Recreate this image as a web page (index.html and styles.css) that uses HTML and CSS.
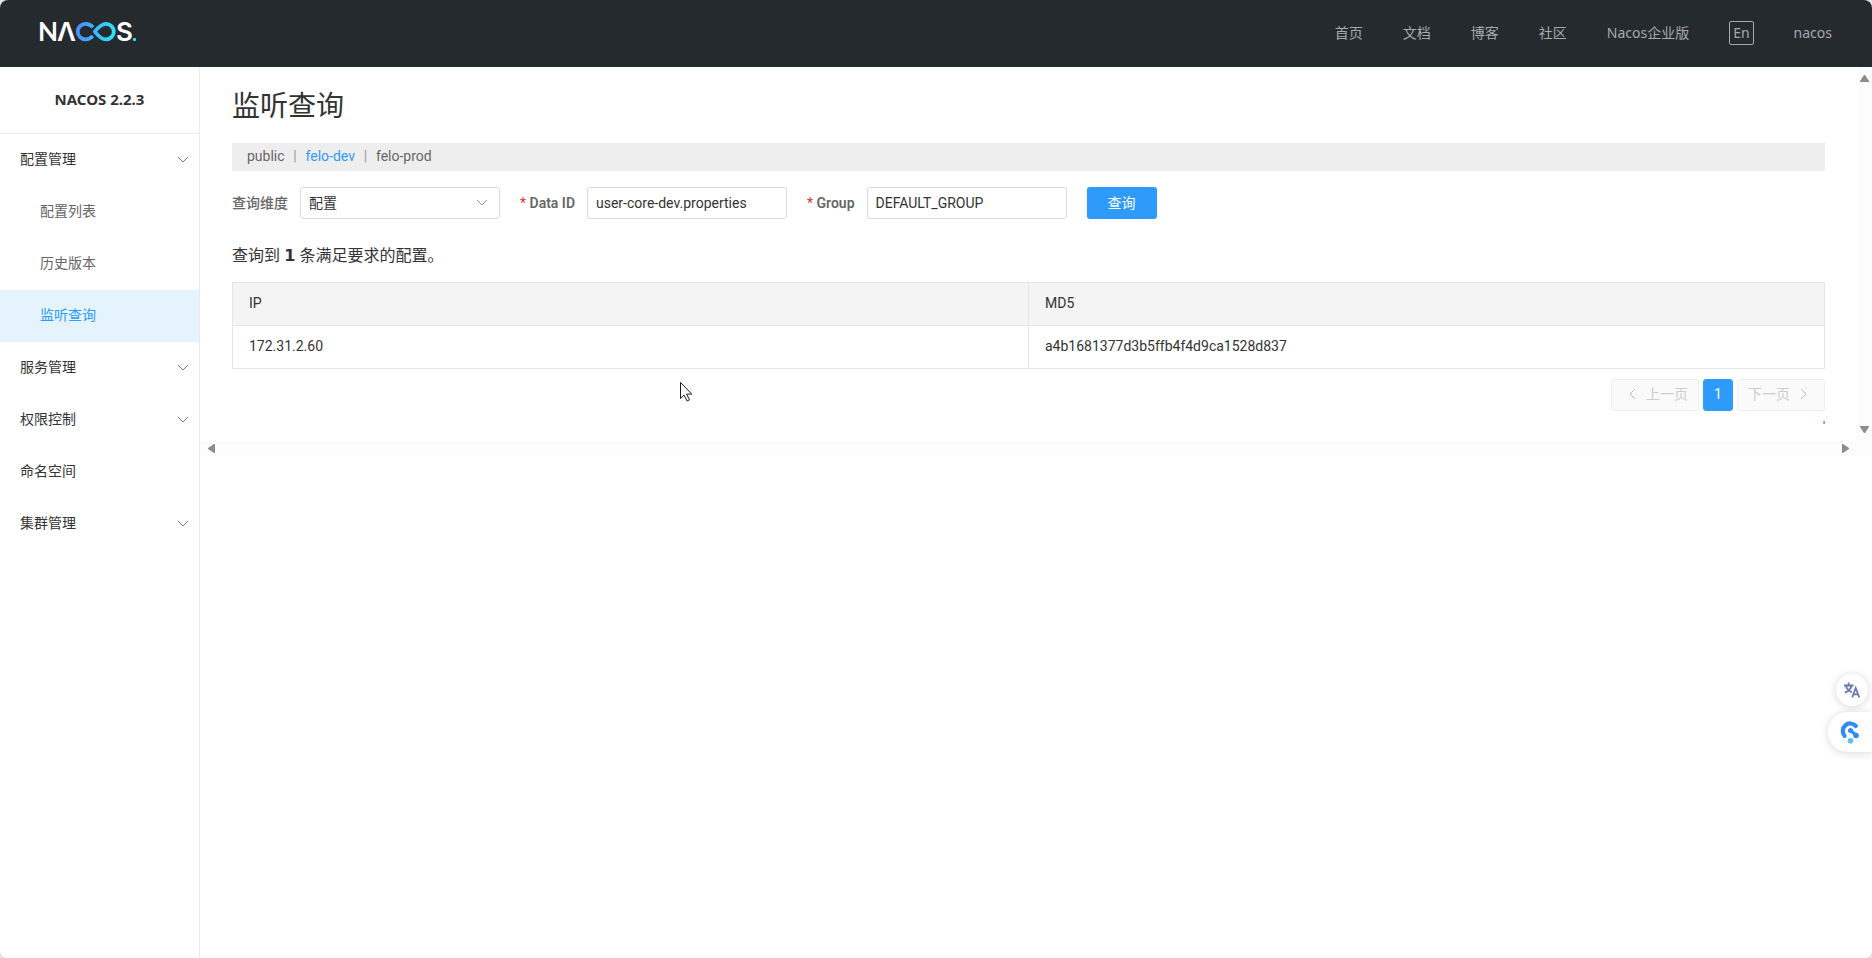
FILE: index.html
```html
<!DOCTYPE html>
<html lang="zh-CN">
<head>
<meta charset="utf-8">
<title>Nacos</title>
<link rel="stylesheet" href="styles.css">
</head>
<body>
<div class="app">
  <header class="header">
    <a class="logo" href="#" aria-label="Nacos">
      <svg width="102" height="36" viewBox="-4 -5 102 36">
        <defs>
          <linearGradient id="loop" gradientUnits="userSpaceOnUse" x1="36" y1="0" x2="76" y2="0">
            <stop offset="0" stop-color="#4a8cff"/>
            <stop offset="1" stop-color="#2ee6f5"/>
          </linearGradient>
        </defs>
        <text class="logo-text" x="-2" y="21">N</text>
        <text class="logo-text wide" x="17" y="21">Λ</text>
        <path d="M53 7.200C51 5 48.500 3.800 45.500 3.800a7.800 7.800 0 0 0 0 15.600c2.800 0 5.200-1.100 7.300-3.400" fill="none" stroke="url(#loop)" stroke-width="3.800"/>
        <path d="M54.800 11.600C58 7.500 61.500 3.800 66 3.800a7.800 7.800 0 0 1 0 15.600C61.500 19.400 58 15.700 54.800 11.600Z" fill="none" stroke="url(#loop)" stroke-width="3.800" stroke-linejoin="round"/>
        <text class="logo-text wide" x="76" y="21">S</text>
        <rect x="93" y="18" width="3" height="3" rx="1" fill="#2ee6f5"/>
      </svg>
    </a>
    <nav class="nav">
      <a href="#">首页</a>
      <a href="#">文档</a>
      <a href="#">博客</a>
      <a href="#">社区</a>
      <a href="#">Nacos企业版</a>
      <button class="lang" type="button">En</button>
      <a href="#">nacos</a>
    </nav>
  </header>

  <div class="body">
    <aside class="sidebar">
      <h2 class="version">NACOS 2.2.3</h2>
      <nav class="menu">
        <a class="item" href="#">配置管理<svg class="chevron" viewBox="0 0 12 8"><path d="M1 1l5 5 5-5"/></svg></a>
        <a class="item sub" href="#">配置列表</a>
        <a class="item sub" href="#">历史版本</a>
        <a class="item sub active" href="#">监听查询</a>
        <a class="item" href="#">服务管理<svg class="chevron" viewBox="0 0 12 8"><path d="M1 1l5 5 5-5"/></svg></a>
        <a class="item" href="#">权限控制<svg class="chevron" viewBox="0 0 12 8"><path d="M1 1l5 5 5-5"/></svg></a>
        <a class="item" href="#">命名空间</a>
        <a class="item" href="#">集群管理<svg class="chevron" viewBox="0 0 12 8"><path d="M1 1l5 5 5-5"/></svg></a>
      </nav>
    </aside>

    <div class="panel">
      <div class="view">
        <main class="content">
          <h1 class="title">监听查询</h1>
          <div class="namespaces">
            <a href="#">public</a><span class="bar">|</span><a class="current" href="#">felo-dev</a><span class="bar">|</span><a href="#">felo-prod</a>
          </div>
          <form class="filters">
            <div class="field">
              <label for="dimension">查询维度</label>
              <div class="select">
                <select id="dimension"><option>配置</option></select>
                <svg class="chevron" viewBox="0 0 12 8"><path d="M1 1l5 5 5-5"/></svg>
              </div>
            </div>
            <div class="field">
              <label for="dataId"><span class="required">*</span> Data ID</label>
              <input id="dataId" type="text" value="user-core-dev.properties">
            </div>
            <div class="field">
              <label for="group"><span class="required">*</span> Group</label>
              <input id="group" type="text" value="DEFAULT_GROUP">
            </div>
            <button class="submit" type="button">查询</button>
          </form>
          <p class="summary">查询到 <strong>1</strong> 条满足要求的配置。</p>
          <table class="table">
            <thead><tr><th>IP</th><th>MD5</th></tr></thead>
            <tbody><tr><td>172.31.2.60</td><td>a4b1681377d3b5ffb4f4d9ca1528d837</td></tr></tbody>
          </table>
          <div class="pager">
            <button type="button" disabled><svg class="arrow" viewBox="0 0 8 12"><path d="M7 1L2 6l5 5"/></svg>上一页</button>
            <button class="page" type="button">1</button>
            <button type="button" disabled>下一页<svg class="arrow" viewBox="0 0 8 12"><path d="M1 1l5 5-5 5"/></svg></button>
          </div>
          <div class="tail">'</div>
        </main>
        <div class="vbar">
          <svg width="9" height="7" viewBox="0 0 9 7"><path d="M4 0h1l4 6v1H0V6z"/></svg>
          <svg width="9" height="7" viewBox="0 0 9 7"><path d="M4 7h1l4-6V0H0v1z"/></svg>
        </div>
      </div>
      <div class="hbar">
        <svg width="7" height="9" viewBox="0 0 7 9"><path d="M0 4v1l6 4h1V0H6z"/></svg>
        <svg width="7" height="9" viewBox="0 0 7 9"><path d="M7 4v1L1 9H0V0h1z"/></svg>
      </div>
    </div>
  </div>

  <svg class="cursor" width="13" height="20" viewBox="0 0 13 20"><path d="M.5.500v16l3.600-3.400 3 5.900 2.400-1.200-2.900-5.700h5.200z" fill="#fff" stroke="#1c1c28"/></svg>

  <div class="tools">
    <button class="translate" type="button" aria-label="翻译">
      <svg width="18" height="18" viewBox="0 0 18 18" fill="none" stroke="#6a78b4" stroke-width="1.800">
        <path d="M1 4.500h9.500M5.700 1.500v3M2.800 4.500c.8 3 3 5.400 6 6.800M8.700 4.500c-.8 3.200-3.300 6-7 7.200M9.200 16.500l3.500-9.500 3.600 9.500M10.500 13.400h4.600"/>
      </svg>
    </button>
    <button class="assist" type="button" aria-label="助手">
      <svg width="20" height="24" viewBox="0 0 20 24">
        <path d="M4.600 15.800A7.200 7.200 0 1 1 15.800 6" fill="none" stroke="#2f8cf7" stroke-width="4.200" stroke-linecap="round"/>
        <path d="M10.500 10.500l5.500 4.500" stroke="#2f8cf7" stroke-width="3"/>
        <circle cx="10.500" cy="10.500" r="2.500" fill="#2f8cf7"/>
        <circle cx="16" cy="15.500" r="2.800" fill="#2f8cf7"/>
        <circle cx="10.500" cy="20.800" r="2.800" fill="#5cc0f8"/>
      </svg>
    </button>
  </div>
</div>
</body>
</html>
```
FILE: styles.css
```css
* { box-sizing: border-box; }

html { background: #e4e4e4; }

body {
  margin: 0;
  font: 14px/20px Roboto, "Noto Sans CJK SC", sans-serif;
  color: #333;
}

a { color: inherit; text-decoration: none; }

button, input, select { font: inherit; color: inherit; margin: 0; }

.app {
  min-height: 100vh;
  display: flex;
  flex-direction: column;
  background: #fff;
  border-radius: 8px;
  overflow: hidden;
}

.header {
  height: 67px;
  padding: 0 40px 2px 36px;
  display: flex;
  align-items: center;
  justify-content: space-between;
  background: #252a2f;
}

.logo { display: flex; }

.logo-text {
  font: 700 26px Lato, sans-serif;
  fill: #fff;
}

.logo-text.wide { font-family: Inter, sans-serif; font-weight: 600; }

.nav {
  display: flex;
  align-items: center;
  gap: 40px;
  font-family: "Noto Sans", "Noto Sans CJK SC", sans-serif;
  color: #a7a9ab;
}

.lang {
  height: 24px;
  padding: 0 3px;
  border: 1px solid #a7a9ab;
  border-radius: 2px;
  background: none;
  line-height: 20px;
}

.body { flex: 1; display: flex; }

.sidebar {
  width: 200px;
  flex: none;
  border-right: 1px solid #ebebeb;
}

.version {
  margin: 0;
  padding-bottom: 2px;
  font: 700 15px/64px "Noto Sans", sans-serif;
  text-align: center;
  border-bottom: 1px solid #ebebeb;
}

.item {
  height: 52px;
  padding: 0 10px 2px 20px;
  display: flex;
  align-items: center;
  justify-content: space-between;
}

.sub { padding-left: 40px; color: #666; }

.active { background: #e4f3fe; color: #2e9bfa; }

.chevron {
  width: 12px;
  height: 8px;
  fill: none;
  stroke: #777;
}

.item .chevron { margin-top: 2px; }

.panel { flex: 1; min-width: 0; }

.view { display: flex; }

.content {
  flex: 1;
  min-width: 0;
  padding: 18px 32px 8px;
}

.title {
  margin: 0 0 14px;
  font-size: 28px;
  font-weight: 400;
  line-height: 44px;
}

.namespaces {
  height: 28px;
  padding: 0 15px 2px;
  display: flex;
  align-items: center;
  background: #eee;
  color: #666;
}

.bar { width: 21px; text-align: center; color: #999; }

.current { color: #2e9bfa; }

.filters {
  margin-top: 16px;
  display: flex;
  gap: 20px;
}

.field {
  display: flex;
  align-items: center;
  gap: 12px;
}

.field label { font-weight: 600; color: #666; }

.field label[for="dimension"] { font-weight: 500; }

.required { color: #d23c26; font-weight: 400; }

.field input, .field select {
  width: 200px;
  height: 32px;
  padding: 0 8px;
  border: 1px solid #dcdcdc;
  border-radius: 3px;
  background: #fff;
  appearance: none;
}

.select { display: grid; align-items: center; }

.select > * { grid-area: 1 / 1; }

.select .chevron {
  justify-self: end;
  margin-right: 12px;
  stroke: #999;
  pointer-events: none;
}

.submit {
  width: 70px;
  height: 32px;
  padding: 0;
  border: 0;
  border-radius: 3px;
  background: #2e9bfa;
  color: #fff;
}

.summary {
  margin: 24px 0 14px;
  font-family: "Noto Sans", "Noto Sans CJK SC", sans-serif;
  font-size: 16px;
  line-height: 24px;
}

.summary strong { font-family: "DejaVu Sans", sans-serif; }

.table {
  width: 100%;
  table-layout: fixed;
  border-collapse: collapse;
}

.table th, .table td {
  height: 43px;
  padding: 0 16px 2px;
  border: 1px solid #e6e6e6;
  font-weight: 400;
  text-align: left;
}

.table th { background: #f4f4f4; }

.pager {
  margin-top: 10px;
  display: flex;
  justify-content: flex-end;
  gap: 4px;
}

.pager button {
  width: 88px;
  height: 32px;
  padding: 0 10px 2px;
  display: flex;
  align-items: center;
  justify-content: flex-end;
  gap: 10px;
  border: 1px solid #eee;
  border-radius: 3px;
  background: #fafafa;
  color: #ccc;
}

.pager button:last-child { justify-content: flex-start; }

.pager .page {
  width: 30px;
  padding: 0 0 2px;
  justify-content: center;
  border-color: #2e9bfa;
  background: #2e9bfa;
  color: #fff;
}

.arrow {
  width: 8px;
  height: 12px;
  fill: none;
  stroke: #bbb;
}

.tail {
  margin-top: 10px;
  font-size: 12px;
  line-height: 12px;
  text-align: right;
}

.vbar, .hbar {
  display: flex;
  align-items: center;
  justify-content: space-between;
  background: #fcfcfc;
  fill: #8c8c8c;
}

.vbar { width: 15px; flex-direction: column; padding: 8px 0; }

.hbar { height: 15px; padding: 0 23px 0 8px; }

.cursor { position: absolute; left: 680px; top: 382px; }

.tools {
  position: fixed;
  right: 0;
  top: 674px;
  display: flex;
  flex-direction: column;
  align-items: flex-end;
  gap: 6px;
}

.tools button {
  padding: 0;
  display: flex;
  align-items: center;
  border: 0;
  background: #fff;
  box-shadow: 0 1px 8px rgba(0, 0, 0, .16);
}

.translate {
  width: 32px;
  height: 32px;
  margin-right: 4px;
  justify-content: center;
  border-radius: 50%;
}

.tools .assist {
  width: 44px;
  height: 40px;
  padding-left: 12px;
  border-radius: 20px 0 0 20px;
}
```
